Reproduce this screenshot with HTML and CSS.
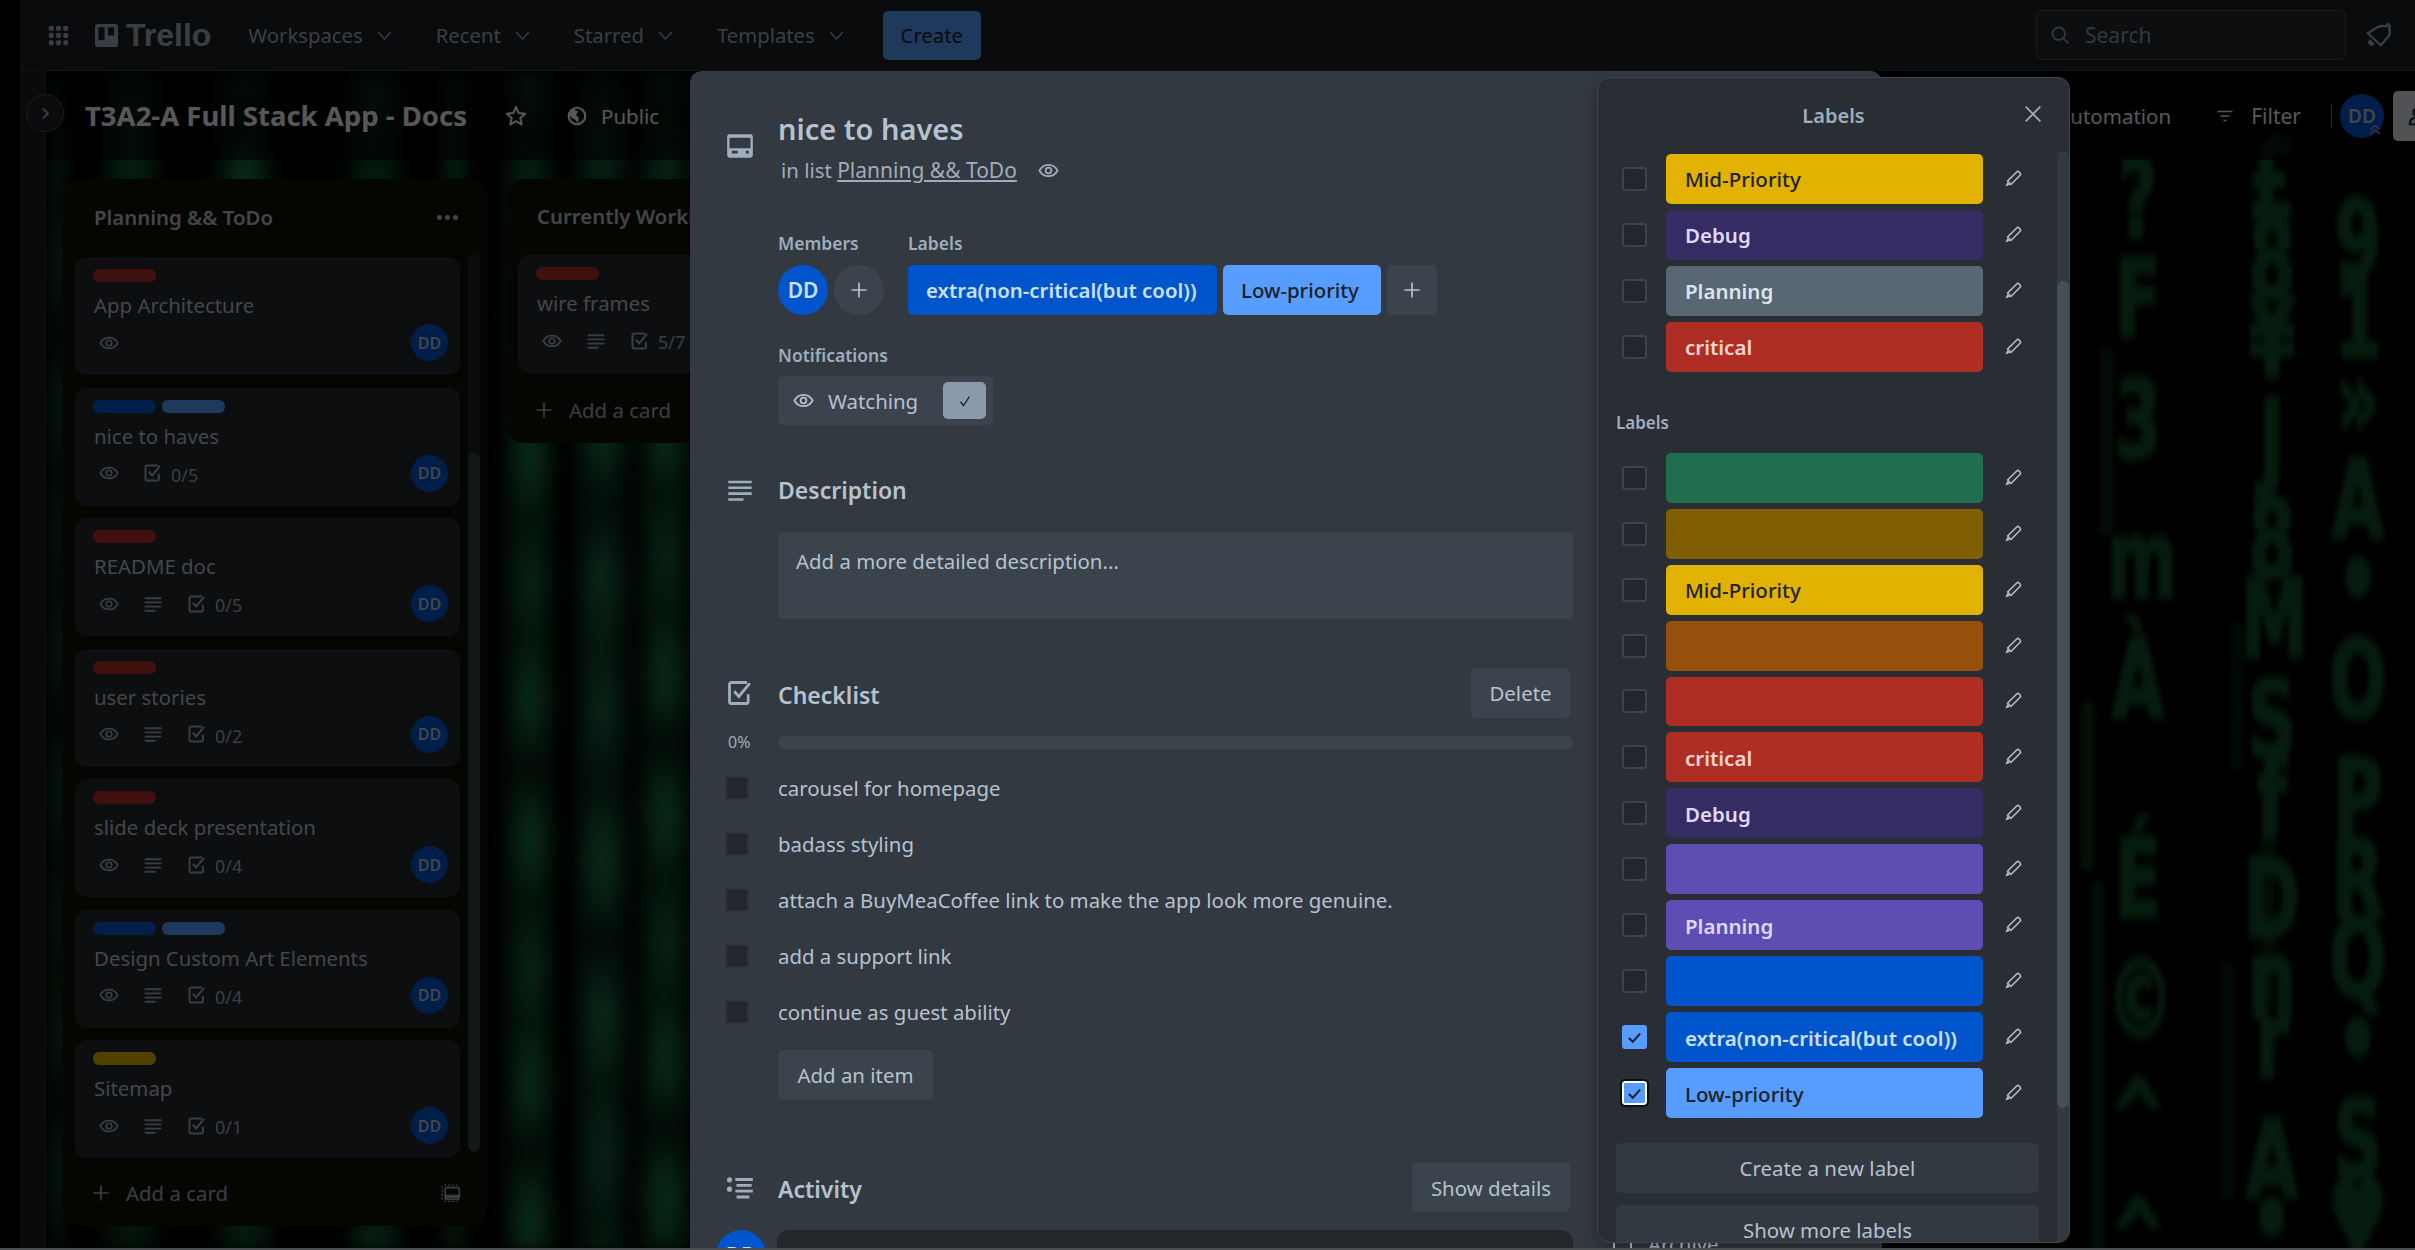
FILE: index.html
```html
<!DOCTYPE html>
<html lang="en">
<head>
<meta charset="utf-8">
<title>nice to haves on T3A2-A Full Stack App - Docs | Trello</title>
<link rel="stylesheet" href="styles.css">
</head>
<body>
<svg class="sprite" aria-hidden="true">
  <symbol id="i-eye" viewBox="0 0 24 24"><path d="M12 5.500C7.200 5.500 3.400 8.600 1.600 12c1.800 3.400 5.600 6.500 10.400 6.500s8.600-3.100 10.400-6.500C20.600 8.600 16.800 5.500 12 5.500z" fill="none" stroke="currentColor" stroke-width="2"/><circle cx="12" cy="12" r="3.300" fill="none" stroke="currentColor" stroke-width="2"/></symbol>
  <symbol id="i-desc" viewBox="0 0 24 24"><path d="M2 4h20v2.200H2zM2 9h20v2.200H2zM2 14h20v2.200H2zM2 19h13v2.200H2z" fill="currentColor"/></symbol>
  <symbol id="i-check" viewBox="0 0 24 24"><path d="M19 13v6.500a1.500 1.500 0 0 1-1.500 1.500h-13A1.500 1.500 0 0 1 3 19.500v-15A1.500 1.500 0 0 1 4.500 3H18" fill="none" stroke="currentColor" stroke-width="2.400"/><path d="M7 10.500l4 4.500 9.500-11.500" fill="none" stroke="currentColor" stroke-width="2.400"/></symbol>
  <symbol id="i-card" viewBox="0 0 24 24"><path fill-rule="evenodd" d="M3 2h18a2 2 0 0 1 2 2v16a2 2 0 0 1-2 2H3a2 2 0 0 1-2-2V4a2 2 0 0 1 2-2zm0 3v9h18V5zm2 11v2.500h5V16zm12 0v2.500h2.500V16z" fill="currentColor"/></symbol>
  <symbol id="i-activity" viewBox="0 0 24 24"><circle cx="3" cy="5" r="2.200" fill="currentColor"/><circle cx="3" cy="13" r="2.200" fill="currentColor"/><path d="M8 3.500h15v2.400H8zM9 8.500h13v2.400H9zM8 13.500h15v2.400H8zM9 18.500h11v2.400H9z" fill="currentColor"/></symbol>
  <symbol id="i-pencil" viewBox="0 0 24 24"><path d="M16.500 3.500a2 2 0 0 1 2.800 0l1.200 1.200a2 2 0 0 1 0 2.800L9.500 18.500 5.500 14.500z" fill="none" stroke="currentColor" stroke-width="1.800"/><path d="M5 15.500l3.500 3.500L3 21z" fill="currentColor"/></symbol>
  <symbol id="i-plus" viewBox="0 0 24 24"><path d="M11 3h2v8h8v2h-8v8h-2v-8H3v-2h8z" fill="currentColor"/></symbol>
  <symbol id="i-x" viewBox="0 0 24 24"><path d="M4 4l16 16M20 4L4 20" fill="none" stroke="currentColor" stroke-width="2"/></symbol>
  <symbol id="i-chev" viewBox="0 0 24 24"><path d="M3 7l9 10 9-10" fill="none" stroke="currentColor" stroke-width="2"/></symbol>
  <symbol id="i-right" viewBox="0 0 24 24"><path d="M8 4l8 8-8 8" fill="none" stroke="currentColor" stroke-width="3"/></symbol>
  <symbol id="i-star" viewBox="0 0 24 24"><path d="M12 3l2.700 6 6.500.700-4.900 4.300 1.400 6.500L12 17.200 6.300 20.500 7.700 14 2.800 9.700 9.300 9z" fill="none" stroke="currentColor" stroke-width="2" stroke-linejoin="round"/></symbol>
  <symbol id="i-globe" viewBox="0 0 24 24"><circle cx="12" cy="12" r="9" fill="none" stroke="currentColor" stroke-width="2.400"/><path d="M8 4l5 3-2 4 3 3-1 6-3-4-5-3-1-4z" fill="currentColor"/></symbol>
  <symbol id="i-search" viewBox="0 0 24 24"><circle cx="10.500" cy="10.500" r="7.500" fill="none" stroke="currentColor" stroke-width="2.200"/><path d="M16 16l6 6" stroke="currentColor" stroke-width="2.200"/></symbol>
  <symbol id="i-bell" viewBox="0 0 24 24"><path d="M19.500 2.500l2 2-1 1.200c1.400 3 1 5.800-1 8.300l-6 6.800L2.500 10.500l7-4.500c2.800-1.800 5.500-2.300 8.500-1.500z" fill="none" stroke="currentColor" stroke-width="2" stroke-linejoin="round"/><path d="M4 15.500l4.500 4.500-3.500 1.500-2.500-2.500z" fill="currentColor"/></symbol>
  <symbol id="i-filter" viewBox="0 0 24 24"><path d="M2 5h20v2H2zM6 11h12v2H6zM10 17h4v2h-4z" fill="currentColor"/></symbol>
  <symbol id="i-tpl" viewBox="0 0 24 24"><rect x="5" y="5.500" width="17" height="14" rx="2" fill="none" stroke="currentColor" stroke-width="2"/><path d="M5 14h17v4H5z" fill="currentColor"/><path d="M1.500 4v17M4 2.500h16M4 22h16" fill="none" stroke="currentColor" stroke-width="1.500" stroke-dasharray="2.500 2"/></symbol>
  <symbol id="i-tick" viewBox="0 0 24 24"><path d="M4 12.500l5.500 5.500L20 6.500" fill="none" stroke="currentColor" stroke-width="2.800"/></symbol>
  <symbol id="i-thin-tick" viewBox="0 0 24 24"><path d="M6 13l4 5 8-12" fill="none" stroke="currentColor" stroke-width="1.800"/></symbol>
  <symbol id="i-person" viewBox="0 0 24 24"><circle cx="12" cy="8" r="4" fill="none" stroke="currentColor" stroke-width="2.400"/><path d="M4 21c0-5 3-7 8-7s8 2 8 7z" fill="none" stroke="currentColor" stroke-width="2.400"/></symbol>
  <symbol id="i-rank" viewBox="0 0 24 24"><path d="M3 12l9-7 9 7M3 20l9-7 9 7" fill="none" stroke="currentColor" stroke-width="3"/></symbol>
  <symbol id="i-logo" viewBox="0 0 24 24"><path fill-rule="evenodd" d="M3 0h18a3 3 0 0 1 3 3v18a3 3 0 0 1-3 3H3a3 3 0 0 1-3-3V3a3 3 0 0 1 3-3zm.5 3.500v13.500h6.500V3.500zm10 0v8.500h6.500V3.500z" fill="currentColor"/></symbol>
  <symbol id="i-grid" viewBox="0 0 24 24"><g fill="currentColor"><rect x="1" y="1" width="5.500" height="5.500" rx="1.500"/><rect x="9.250" y="1" width="5.500" height="5.500" rx="1.500"/><rect x="17.500" y="1" width="5.500" height="5.500" rx="1.500"/><rect x="1" y="9.250" width="5.500" height="5.500" rx="1.500"/><rect x="9.250" y="9.250" width="5.500" height="5.500" rx="1.500"/><rect x="17.500" y="9.250" width="5.500" height="5.500" rx="1.500"/><rect x="1" y="17.500" width="5.500" height="5.500" rx="1.500"/><rect x="9.250" y="17.500" width="5.500" height="5.500" rx="1.500"/><rect x="17.500" y="17.500" width="5.500" height="5.500" rx="1.500"/></g></symbol>
</svg>

<div class="screen">
  <div class="matrix" aria-hidden="true">
    <i class="blob b1"></i><i class="blob b2"></i><i class="blob b3"></i><i class="blob b4"></i><i class="blob b5"></i><i class="blob b6"></i><i class="blob b7"></i><i class="blob b8"></i><i class="blob b9"></i>
    <i class="streak k1"></i><i class="streak k2"></i><i class="streak k3"></i><i class="streak k4"></i><i class="streak k5"></i><i class="streak k6"></i>
    <div class="rain r1">
?




F





3






m





À









É





©





^





^</div>
    <div class="rain r2">£



8



¥




J




8



M




S



f




D



n


r





A


•</div>
    <div class="rain r3">


9



1



»




A



•




O





P



R



Q



•




S



♥</div>
  </div>

  <div class="window">
    <header class="topbar">
      <svg class="ic-grid"><use href="#i-grid"/></svg>
      <div class="brand"><svg class="ic-logo"><use href="#i-logo"/></svg><span class="brand-name">Trello</span></div>
      <nav class="nav">
        <span class="nav-item">Workspaces<svg class="ic-chev"><use href="#i-chev"/></svg></span>
        <span class="nav-item">Recent<svg class="ic-chev"><use href="#i-chev"/></svg></span>
        <span class="nav-item">Starred<svg class="ic-chev"><use href="#i-chev"/></svg></span>
        <span class="nav-item">Templates<svg class="ic-chev"><use href="#i-chev"/></svg></span>
      </nav>
      <span class="create">Create</span>
      <div class="search"><svg class="ic-search"><use href="#i-search"/></svg><span>Search</span></div>
      <svg class="ic-bell"><use href="#i-bell"/></svg>
    </header>

    <div class="workspace">
      <aside class="rail"></aside>
      <span class="rail-btn"><svg class="ic-right"><use href="#i-right"/></svg></span>
      <div class="board">
        <div class="board-head">
          <h1 class="board-title">T3A2-A Full Stack App - Docs</h1>
          <svg class="ic-star"><use href="#i-star"/></svg>
          <span class="vis"><svg class="ic-globe"><use href="#i-globe"/></svg>Public</span>
          <span class="head-right">
            <span class="automation">Automation</span>
            <span class="filter"><svg class="ic-filter"><use href="#i-filter"/></svg>Filter</span>
            <span class="head-divider"></span>
            <span class="head-avatar">DD<svg class="ic-rank"><use href="#i-rank"/></svg></span>
            <span class="share"><svg class="ic-person"><use href="#i-person"/></svg></span>
          </span>
        </div>

        <div class="lists">
          <section class="list">
            <div class="list-head"><span>Planning &amp;&amp; ToDo</span><span class="dots"><i></i><i></i><i></i></span></div>
            <div class="cards">
              <article class="card">
                <div class="tags"><i class="tag t-red"></i></div>
                <div class="card-title">App Architecture</div>
                <div class="card-meta"><svg class="ic-sm"><use href="#i-eye"/></svg><span class="avatar">DD</span></div>
              </article>
              <article class="card">
                <div class="tags"><i class="tag t-blue"></i><i class="tag t-sky"></i></div>
                <div class="card-title">nice to haves</div>
                <div class="card-meta"><svg class="ic-sm"><use href="#i-eye"/></svg><span class="badge"><svg class="ic-sm"><use href="#i-check"/></svg><span class="count">0/5</span></span><span class="avatar">DD</span></div>
              </article>
              <article class="card">
                <div class="tags"><i class="tag t-red"></i></div>
                <div class="card-title">README doc</div>
                <div class="card-meta"><svg class="ic-sm"><use href="#i-eye"/></svg><svg class="ic-sm"><use href="#i-desc"/></svg><span class="badge"><svg class="ic-sm"><use href="#i-check"/></svg><span class="count">0/5</span></span><span class="avatar">DD</span></div>
              </article>
              <article class="card">
                <div class="tags"><i class="tag t-red"></i></div>
                <div class="card-title">user stories</div>
                <div class="card-meta"><svg class="ic-sm"><use href="#i-eye"/></svg><svg class="ic-sm"><use href="#i-desc"/></svg><span class="badge"><svg class="ic-sm"><use href="#i-check"/></svg><span class="count">0/2</span></span><span class="avatar">DD</span></div>
              </article>
              <article class="card">
                <div class="tags"><i class="tag t-red"></i></div>
                <div class="card-title">slide deck presentation</div>
                <div class="card-meta"><svg class="ic-sm"><use href="#i-eye"/></svg><svg class="ic-sm"><use href="#i-desc"/></svg><span class="badge"><svg class="ic-sm"><use href="#i-check"/></svg><span class="count">0/4</span></span><span class="avatar">DD</span></div>
              </article>
              <article class="card">
                <div class="tags"><i class="tag t-blue"></i><i class="tag t-sky"></i></div>
                <div class="card-title">Design Custom Art Elements</div>
                <div class="card-meta"><svg class="ic-sm"><use href="#i-eye"/></svg><svg class="ic-sm"><use href="#i-desc"/></svg><span class="badge"><svg class="ic-sm"><use href="#i-check"/></svg><span class="count">0/4</span></span><span class="avatar">DD</span></div>
              </article>
              <article class="card">
                <div class="tags"><i class="tag t-yellow"></i></div>
                <div class="card-title">Sitemap</div>
                <div class="card-meta"><svg class="ic-sm"><use href="#i-eye"/></svg><svg class="ic-sm"><use href="#i-desc"/></svg><span class="badge"><svg class="ic-sm"><use href="#i-check"/></svg><span class="count">0/1</span></span><span class="avatar">DD</span></div>
              </article>
            </div>
            <div class="list-foot"><svg class="ic-add"><use href="#i-plus"/></svg><span>Add a card</span><svg class="ic-tpl"><use href="#i-tpl"/></svg></div>
            <span class="list-scroll"><i></i></span>
          </section>

          <section class="list list-short">
            <div class="list-head"><span>Currently Working On</span></div>
            <div class="cards">
              <article class="card">
                <div class="tags"><i class="tag t-red"></i></div>
                <div class="card-title">wire frames</div>
                <div class="card-meta"><svg class="ic-sm"><use href="#i-eye"/></svg><svg class="ic-sm"><use href="#i-desc"/></svg><span class="badge"><svg class="ic-sm"><use href="#i-check"/></svg><span class="count">5/7</span></span></div>
              </article>
            </div>
            <div class="list-foot"><svg class="ic-add"><use href="#i-plus"/></svg><span>Add a card</span></div>
          </section>

          <div class="add-list"></div>
        </div>
      </div>
    </div>
  </div>

  <div class="blanket"></div>

  <main class="modal">
    <div class="sec">
      <svg class="ic-sec"><use href="#i-card"/></svg>
      <div>
        <h2 class="modal-title">nice to haves</h2>
        <p class="in-list">in list <u>Planning &amp;&amp; ToDo</u><svg class="ic-sub"><use href="#i-eye"/></svg></p>
      </div>
    </div>

    <div class="sec sec-meta">
      <div class="meta-col">
        <div class="meta-row">
          <div class="meta-group">
            <h3 class="meta-label">Members</h3>
            <div class="chips"><span class="member">DD</span><span class="add-member"><svg class="ic-add"><use href="#i-plus"/></svg></span></div>
          </div>
          <div class="meta-group">
            <h3 class="meta-label">Labels</h3>
            <div class="chips">
              <span class="chip l-blue">extra(non-critical(but cool))</span>
              <span class="chip l-sky">Low-priority</span>
              <span class="add-label"><svg class="ic-add"><use href="#i-plus"/></svg></span>
            </div>
          </div>
        </div>
        <h3 class="meta-label notif-label">Notifications</h3>
        <div class="watch"><svg class="ic-sub"><use href="#i-eye"/></svg><span>Watching</span><span class="watch-on"><svg class="ic-thin"><use href="#i-thin-tick"/></svg></span></div>
      </div>
    </div>

    <div class="sec sec-desc">
      <svg class="ic-sec"><use href="#i-desc"/></svg>
      <h3 class="sec-title">Description</h3>
    </div>
    <div class="sec sec-box">
      <div class="desc-box">Add a more detailed description...</div>
    </div>

    <div class="sec sec-check">
      <svg class="ic-sec"><use href="#i-check"/></svg>
      <div class="sec-row"><h3 class="sec-title">Checklist</h3><span class="btn">Delete</span></div>
    </div>
    <div class="sec sec-progress">
      <span class="pct">0%</span>
      <span class="progress"></span>
    </div>
    <ul class="items">
      <li class="item"><i class="box"></i><span>carousel for homepage</span></li>
      <li class="item"><i class="box"></i><span>badass styling</span></li>
      <li class="item"><i class="box"></i><span>attach a BuyMeaCoffee link to make the app look more genuine.</span></li>
      <li class="item"><i class="box"></i><span>add a support link</span></li>
      <li class="item"><i class="box"></i><span>continue as guest ability</span></li>
    </ul>
    <div class="sec sec-add"><span class="btn btn-item">Add an item</span></div>

    <div class="sec sec-activity">
      <svg class="ic-sec"><use href="#i-activity"/></svg>
      <div class="sec-row"><h3 class="sec-title">Activity</h3><span class="btn btn-details">Show details</span></div>
    </div>
    <div class="comment-row"><span class="member comment-av">DD</span><div class="comment"></div></div>
    <span class="archive"><i class="archive-ic"></i>Archive</span>
  </main>

  <aside class="labels-pop">
    <div class="pop-head"><span class="pop-title">Labels</span><svg class="ic-close"><use href="#i-x"/></svg></div>
    <div class="pop-body">
      <div class="rows">
        <div class="row"><i class="cb"></i><span class="lab c-yellow">Mid-Priority</span><svg class="ic-edit"><use href="#i-pencil"/></svg></div>
        <div class="row"><i class="cb"></i><span class="lab c-indigo">Debug</span><svg class="ic-edit"><use href="#i-pencil"/></svg></div>
        <div class="row"><i class="cb"></i><span class="lab c-slate">Planning</span><svg class="ic-edit"><use href="#i-pencil"/></svg></div>
        <div class="row"><i class="cb"></i><span class="lab c-red">critical</span><svg class="ic-edit"><use href="#i-pencil"/></svg></div>
      </div>
      <h4 class="pop-sub">Labels</h4>
      <div class="rows">
        <div class="row"><i class="cb"></i><span class="lab c-green"></span><svg class="ic-edit"><use href="#i-pencil"/></svg></div>
        <div class="row"><i class="cb"></i><span class="lab c-olive"></span><svg class="ic-edit"><use href="#i-pencil"/></svg></div>
        <div class="row"><i class="cb"></i><span class="lab c-yellow">Mid-Priority</span><svg class="ic-edit"><use href="#i-pencil"/></svg></div>
        <div class="row"><i class="cb"></i><span class="lab c-orange"></span><svg class="ic-edit"><use href="#i-pencil"/></svg></div>
        <div class="row"><i class="cb"></i><span class="lab c-red"></span><svg class="ic-edit"><use href="#i-pencil"/></svg></div>
        <div class="row"><i class="cb"></i><span class="lab c-red">critical</span><svg class="ic-edit"><use href="#i-pencil"/></svg></div>
        <div class="row"><i class="cb"></i><span class="lab c-indigo">Debug</span><svg class="ic-edit"><use href="#i-pencil"/></svg></div>
        <div class="row"><i class="cb"></i><span class="lab c-purple"></span><svg class="ic-edit"><use href="#i-pencil"/></svg></div>
        <div class="row"><i class="cb"></i><span class="lab c-purple">Planning</span><svg class="ic-edit"><use href="#i-pencil"/></svg></div>
        <div class="row"><i class="cb"></i><span class="lab c-blue"></span><svg class="ic-edit"><use href="#i-pencil"/></svg></div>
        <div class="row"><i class="cb cb-on"><svg class="ic-tick"><use href="#i-tick"/></svg></i><span class="lab c-blue">extra(non-critical(but cool))</span><svg class="ic-edit"><use href="#i-pencil"/></svg></div>
        <div class="row"><i class="cb cb-on cb-focus"><svg class="ic-tick"><use href="#i-tick"/></svg></i><span class="lab c-sky">Low-priority</span><svg class="ic-edit"><use href="#i-pencil"/></svg></div>
      </div>
      <div class="pop-btns">
        <span class="pop-btn">Create a new label</span>
        <span class="pop-btn">Show more labels</span>
      </div>
    </div>
    <span class="pop-scroll"><i></i></span>
  </aside>

  <div class="edge"></div>
</div>
</body>
</html>
```

FILE: styles.css
```css
* { box-sizing: border-box; }
html, body { margin: 0; padding: 0; background: #000; }
body { font-family: "Noto Sans", "Open Sans", sans-serif; color: #b6c2cf; overflow: hidden; }
h1, h2, h3, h4, p, ul { margin: 0; padding: 0; font: inherit; }
i { font-style: normal; display: block; }
.sprite { position: absolute; width: 0; height: 0; }

.screen { position: relative; width: 2415px; height: 1250px; overflow: hidden; background: #000; }

/* matrix wallpaper: marks scattered on a free canvas */
.matrix { position: absolute; left: 46px; top: 71px; right: 0; bottom: 0; overflow: hidden; }
.blob {
  position: absolute; top: 0; bottom: 0; width: 58px; filter: blur(8px);
  background-color: rgba(24, 120, 60, .26);
  background-image:
    radial-gradient(ellipse closest-side, rgba(40, 170, 110, .5), rgba(40, 170, 110, 0)),
    radial-gradient(ellipse closest-side, rgba(30, 150, 70, .4), rgba(30, 150, 70, 0));
  background-size: 100% 128px, 100% 190px;
  background-position: 0 10px, 0 70px;
}
.b1 { left: 5px; width: 14px; }
.b2 { left: 56px; }
.b3 { left: 170px; background-position: 0 50px, 0 10px; }
.b4 { left: 300px; background-position: 0 90px, 0 30px; }
.b5 { left: 395px; width: 28px; }
.b6 { left: 440px; width: 10px; background-color: rgba(24, 120, 60, .1); background-image: none; }
.b7 { left: 458px; width: 52px; background-position: 0 60px, 0 120px; }
.b8 { left: 528px; width: 56px; background-color: rgba(28, 110, 80, .26); background-position: 0 -10px, 0 40px; background-size: 100% 146px, 100% 210px; }
.b9 { left: 592px; width: 54px; background-position: 0 35px, 0 100px; }
.streak { position: absolute; width: 14px; border-radius: 7px; background: #176a34; filter: blur(3px); opacity: .5; }
.k1 { left: 2034px; top: 630px; height: 170px; }
.k2 { left: 2053px; top: 275px; height: 190px; opacity: .35; }
.k3 { left: 2046px; top: 810px; height: 370px; width: 12px; opacity: .45; }
.k4 { left: 2174px; top: 890px; height: 240px; opacity: .3; }
.k5 { left: 2184px; top: 550px; height: 150px; opacity: .22; }
.k6 { left: 2215px; top: 700px; height: 240px; opacity: .35; }
.rain {
  position: absolute; top: 99px; width: 100px; white-space: pre; text-align: center;
  font-family: "DejaVu Sans", sans-serif; font-weight: 700; font-size: 108px; line-height: 20px;
  color: #114e27; -webkit-text-stroke: 4px #114e27; filter: blur(4.500px); transform: scaleX(.62);
}
.r1 { left: 2042px; }
.r2 { left: 2176px; }
.r3 { left: 2262px; }

.window { position: absolute; inset: 0 0 0 20px; display: flex; flex-direction: column; }

/* top bar */
.topbar { flex: none; height: 71px; display: flex; align-items: center; background: #1d2125; border-bottom: 1px solid #31373d; padding-left: 28px; position: relative; font-size: 20.300px; }
.ic-grid { width: 21px; height: 21px; color: #9fadbc; flex: none; }
.brand { display: flex; align-items: center; margin-left: 25px; color: #9fadbc; }
.ic-logo { width: 25px; height: 23px; }
.brand-name { font-family: "Liberation Sans", sans-serif; font-weight: 700; font-size: 32px; margin-left: 7px; }
.nav { display: flex; margin-left: 37px; color: #9fadbc; gap: 43px; }
.nav-item { display: flex; align-items: center; gap: 13px; }
.ic-chev { width: 17px; height: 17px; }
.create { margin-left: 38px; width: 98px; height: 49px; display: flex; align-items: center; justify-content: center; background: #579dff; border-radius: 5px; color: #1d2125; }
.search { margin-left: auto; margin-right: 19px; width: 310px; height: 50px; border: 1px solid #454f59; border-radius: 6px; background: #22272b; display: flex; align-items: center; padding-left: 13px; gap: 15px; color: #8c9bab; font-size: 21px; }
.ic-search { width: 20px; height: 20px; }
.ic-bell { width: 28px; height: 28px; margin-right: 22px; color: #9fadbc; }

/* board */
.workspace { flex: 1; display: flex; position: relative; min-height: 0; }
.rail { width: 26px; flex: none; background: rgba(29, 33, 37, .9); border-right: 1px solid #2c333a; }
.rail-btn { position: absolute; left: 6px; top: 23px; width: 38px; height: 38px; border-radius: 50%; background: #1d2125; border: 1px solid #454f59; display: flex; align-items: center; justify-content: center; color: #9fadbc; }
.ic-right { width: 15px; height: 15px; }
.board { flex: 1; display: flex; flex-direction: column; min-width: 0; }
.board-head { flex: none; height: 89px; display: flex; align-items: center; padding-left: 39px; background: rgba(0, 0, 0, .6); color: #f1f2f4; }
.board-title { font-size: 27.500px; font-weight: 700; white-space: nowrap; }
.ic-star { width: 24px; height: 24px; margin-left: 37px; }
.vis { display: flex; align-items: center; margin-left: 38px; gap: 13px; font-size: 20.500px; }
.ic-globe { width: 22px; height: 22px; }
.head-right { margin-left: auto; display: flex; align-items: center; font-size: 20.500px; }
.automation { margin-right: 45px; }
.filter { display: flex; align-items: center; gap: 17px; font-size: 21px; }
.ic-filter { width: 18px; height: 18px; }
.head-divider { width: 1px; height: 24px; background: #6a7278; margin: 0 8px 0 30px; }
.head-avatar { position: relative; width: 44px; height: 44px; border-radius: 50%; background: #0055cc; display: flex; align-items: center; justify-content: center; color: #b6c2cf; font-size: 19px; font-weight: 600; margin: 0 9px 0 0; }
.ic-rank { position: absolute; right: 2px; bottom: 2px; width: 14px; height: 13px; color: #8f7ee7; }
.share { width: 22px; height: 50px; border-radius: 5px 0 0 5px; background: #dcdfe4; overflow: hidden; display: flex; padding-left: 13px; align-items: center; color: #172b4d; }
.ic-person { width: 22px; height: 22px; flex: none; }

.lists { flex: 1; display: flex; align-items: flex-start; padding: 19px 0 0 17px; gap: 19px; min-height: 0; }
.list { position: relative; flex: none; width: 424px; background: #101204; border-radius: 18px; height: 1047px; padding: 0 12px; }
.list-short { height: 264px; }
.list-head { height: 78px; display: flex; align-items: center; justify-content: space-between; font-size: 20.400px; font-weight: 600; padding: 0 17px 2px 19px; }
.list-short .list-head { height: 76px; }
.dots { display: flex; gap: 3px; }
.dots i { width: 5px; height: 5px; border-radius: 50%; background: #b6c2cf; }
.cards { display: flex; flex-direction: column; gap: 12.500px; }
.card { position: relative; width: 385px; height: 118px; background: #22272b; border-radius: 12px; padding: 12px 12px 0 18px; }
.tags { display: flex; gap: 6px; height: 13px; }
.tag { width: 63px; height: 13px; border-radius: 6px; }
.t-red { background: #ae2e24; }
.t-blue { background: #0055cc; }
.t-sky { background: #579dff; }
.t-yellow { background: #e2b203; }
.card-title { font-size: 20.400px; line-height: 28px; margin: 9px 0 0 1px; }
.card-meta { display: flex; align-items: center; height: 37px; margin-top: 5px; padding-left: 6px; gap: 24px; color: #9fadbc; font-size: 18px; }
.ic-sm { width: 20px; height: 20px; flex: none; }
.badge { display: flex; align-items: center; gap: 8px; }
.count { padding-top: 3px; }
.avatar { margin-left: auto; width: 37px; height: 37px; border-radius: 50%; background: #0055cc; display: flex; align-items: center; justify-content: center; font-size: 16px; font-weight: 600; color: #b6c2cf; }
.list-foot { display: flex; align-items: center; height: 68px; font-size: 20.400px; color: #9fadbc; padding: 2px 14px 0 16px; gap: 15px; }
.list-short .list-foot { height: 72px; }
.ic-add { width: 20px; height: 20px; flex: none; }
.ic-tpl { width: 20px; height: 20px; margin-left: auto; }
.list-scroll { position: absolute; left: 405px; top: 75px; width: 12px; height: 898px; border-radius: 6px; background: #2c333a; overflow: hidden; opacity: .55; }
.list-scroll i { margin-top: 199px; height: 699px; background: #596773; border-radius: 6px; }
.add-list { flex: none; width: 295px; height: 75px; margin-left: 519px; border-radius: 18px; background: rgba(255, 255, 255, .24); }

.blanket { position: absolute; inset: 0 0 0 20px; background: rgba(0, 0, 0, .64); }

/* card modal */
.modal { position: absolute; left: 690px; top: 71px; width: 1192px; bottom: 0; background: #323940; border-radius: 12px 12px 0 0; padding: 38px 0 0 36px; overflow: hidden; }
.sec { display: grid; grid-template-columns: 52px 795px; align-items: center; }
.ic-sec { width: 28px; height: 28px; color: #9fadbc; }
.modal-title { font-size: 29px; font-weight: 600; line-height: 40px; }
.in-list { display: flex; align-items: center; font-size: 20.400px; line-height: 26px; margin: 8px 0 0 3px; white-space: pre; color: #9fadbc; }
.in-list u { font-size: 21px; }
.ic-sub { width: 21px; height: 21px; flex: none; }
.in-list .ic-sub { margin-left: 21px; }
.sec-meta { margin-top: 48px; }
.meta-col { grid-column: 2; }
.meta-row { display: flex; gap: 24px; }
.meta-label { font-size: 17.500px; font-weight: 600; line-height: 24px; color: #9fadbc; }
.chips { display: flex; gap: 6px; margin-top: 10px; height: 50px; }
.member { width: 50px; height: 50px; border-radius: 50%; background: #0055cc; color: #cce0ff; display: flex; align-items: center; justify-content: center; font-size: 21px; font-weight: 600; flex: none; }
.add-member { width: 50px; height: 50px; border-radius: 50%; background: #3b444c; display: flex; align-items: center; justify-content: center; }
.chip { height: 50px; display: flex; align-items: center; padding: 0 18px; border-radius: 5px; font-size: 20.400px; font-weight: 600; white-space: nowrap; }
.l-blue { width: 309px; background: #0055cc; color: #cce0ff; }
.l-sky { width: 158px; background: #579dff; color: #1d2125; font-weight: 500; }
.add-label { width: 50px; height: 50px; border-radius: 5px; background: #3b444c; display: flex; align-items: center; justify-content: center; }
.notif-label { margin-top: 28px; }
.watch { margin-top: 9px; width: 215px; height: 49px; border-radius: 5px; background: #3b444c; display: flex; align-items: center; padding-left: 15px; font-size: 20.400px; gap: 14px; }
.watch-on { margin-left: auto; margin-right: 7px; width: 43px; height: 37px; border-radius: 5px; background: #8c9bab; display: flex; align-items: center; justify-content: center; color: #1d2125; }
.ic-thin { width: 18px; height: 18px; }
.sec-desc { margin-top: 40px; height: 50px; }
.sec-title { font-size: 23px; font-weight: 600; }
.sec-row .sec-title { padding-top: 3px; }
.sec-box { margin-top: 17px; }
.desc-box { grid-column: 2; height: 87px; background: #3b444c; border-radius: 5px; padding: 15px 18px; font-size: 20.400px; line-height: 28px; }
.sec-check { margin-top: 49px; height: 50px; }
.sec-row { display: flex; align-items: center; justify-content: space-between; padding-right: 3px; }
.btn { height: 50px; display: flex; align-items: center; justify-content: center; border-radius: 5px; background: #3b444c; font-size: 20.400px; }
.sec-row .btn { width: 99px; }
.sec-progress { margin-top: 18px; }
.pct { font-size: 16px; padding-left: 2px; color: #9fadbc; line-height: 13px; }
.progress { height: 13px; border-radius: 7px; background: #3b444c; }
.items { list-style: none; margin-top: 11px; }
.item { display: grid; grid-template-columns: 52px 795px; align-items: center; height: 56px; font-size: 20.400px; }
.box { width: 24px; height: 24px; margin-left: -1px; border-radius: 3px; background: #22272b; border: 2px solid #2c333a; }
.sec-add { margin-top: 10px; }
.btn-item { grid-column: 2; width: 155px; }
.sec-activity { margin-top: 63px; height: 49px; }
.sec-row .btn-details { width: 158px; height: 49px; }
.comment-row { display: flex; align-items: flex-start; margin: 18px 0 0 -10px; gap: 11px; }
.comment { width: 796px; height: 80px; border-radius: 12px; background: #22272b; }
.archive { position: absolute; left: 923px; top: 1160px; display: flex; align-items: center; gap: 16px; font-size: 20.400px; line-height: 26px; }
.archive-ic { width: 19px; height: 18px; border: 2px solid #b6c2cf; border-radius: 2px; }

/* labels popover */
.labels-pop { position: absolute; left: 1597px; top: 77px; width: 473px; height: 1166px; background: #282e33; border: 1px solid #3d464e; border-radius: 12px; overflow: hidden; box-shadow: 0 6px 14px rgba(0, 0, 0, .3); }
.pop-head { height: 76px; display: flex; align-items: center; justify-content: center; position: relative; }
.pop-title { font-size: 20px; font-weight: 600; color: #9fadbc; margin-top: -1px; }
.ic-close { position: absolute; left: 424px; top: 25px; width: 22px; height: 22px; color: #9fadbc; }
.pop-body { padding: 0 0 0 18px; }
.rows { display: flex; flex-direction: column; gap: 6px; }
.row { display: flex; align-items: center; height: 49.950px; }
.cb { width: 25px; height: 24px; margin-left: 6px; border-radius: 3px; background: #22272b; border: 2px solid #3b444c; flex: none; }
.cb-on { background: #579dff; border-color: #579dff; display: flex; align-items: center; justify-content: center; color: #1d2125; }
.cb-focus { border: 2px solid #fff; outline: 2px solid #0d0f10; }
.ic-tick { width: 17px; height: 17px; }
.lab { width: 317px; height: 100%; margin-left: 19px; border-radius: 5px; display: flex; align-items: center; padding: 1px 0 0 19px; font-size: 20.500px; font-weight: 500; }
.c-yellow { background: #e2b203; color: #1d2125; }
.c-indigo { background: #352c63; color: #dfd8fd; font-weight: 600; }
.c-slate { background: #596773; color: #dee4ea; font-weight: 600; }
.c-red { background: #ae2e24; color: #ffd5d2; font-weight: 600; }
.c-green { background: #216e4e; }
.c-olive { background: #7f5f01; }
.c-orange { background: #974f0c; }
.c-purple { background: #5e4db2; color: #dfd8fd; font-weight: 600; }
.c-blue { background: #0055cc; color: #cce0ff; font-weight: 600; }
.c-sky { background: #579dff; color: #1d2125; }
.ic-edit { width: 20px; height: 20px; margin-left: 20px; color: #b6c2cf; flex: none; }
.pop-sub { font-size: 17px; font-weight: 600; color: #9fadbc; line-height: 24px; margin: 39px 0 18px 0; }
.pop-btns { display: flex; flex-direction: column; gap: 12px; margin-top: 25px; width: 423px; }
.pop-btn { flex: none; height: 50px; border-radius: 5px; background: #323940; display: flex; align-items: center; justify-content: center; font-size: 20.400px; color: #b6c2cf; }
.pop-scroll { position: absolute; left: 459px; top: 73px; width: 12px; bottom: 0; background: #323940; border-radius: 6px 6px 0 0; }
.pop-scroll i { margin-top: 130px; height: 827px; background: #454f59; border-radius: 6px; }

.edge { position: absolute; left: 0; right: 0; bottom: 0; height: 2px; background: #4a4f54; }
```
